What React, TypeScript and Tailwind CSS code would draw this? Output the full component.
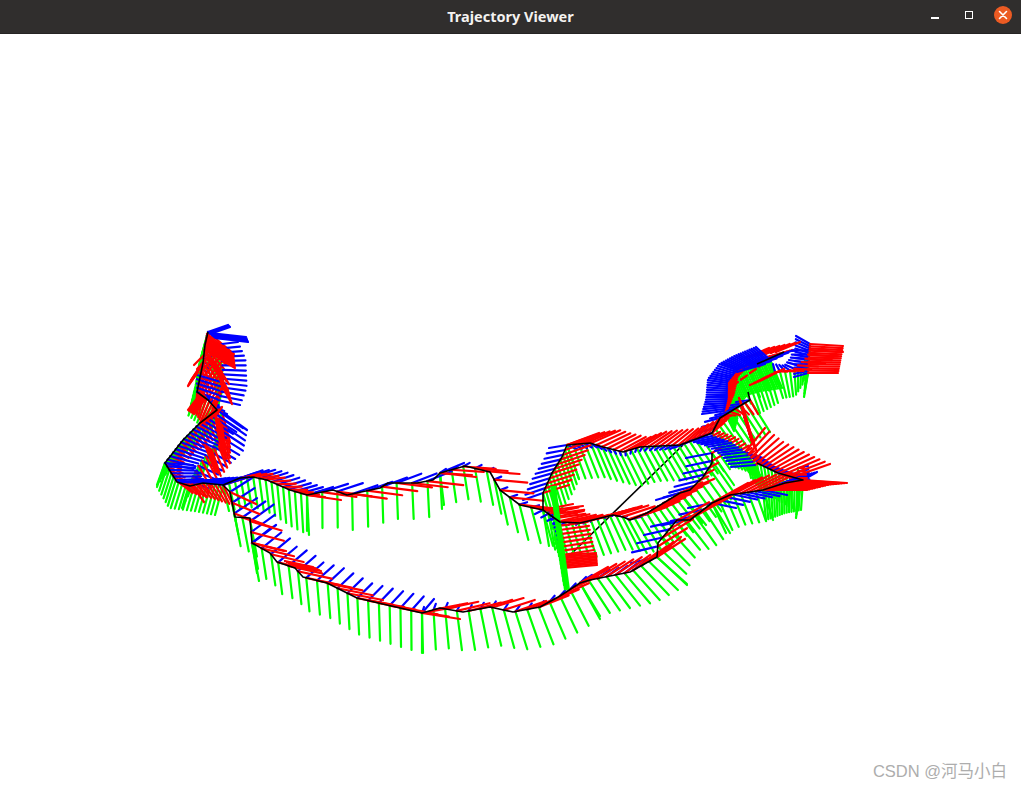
import React from "react";

type P = [number, number];
type Sec = { pts: P[]; n: number; r: [P, P]; g: [P, P]; b: [P, P]; top?: boolean; rt?: boolean };

const along = (pts: P[], t: number): P => {
  const lens = pts.slice(1).map((p, i) => Math.hypot(p[0] - pts[i][0], p[1] - pts[i][1]));
  const total = lens.reduce((a, b) => a + b, 0);
  let d = t * total;
  for (let i = 0; i < lens.length; i++) {
    if (d <= lens[i] || i === lens.length - 1) {
      const u = lens[i] ? d / lens[i] : 0;
      return [pts[i][0] + (pts[i + 1][0] - pts[i][0]) * u, pts[i][1] + (pts[i + 1][1] - pts[i][1]) * u];
    }
    d -= lens[i];
  }
  return pts[0];
};
const mix = (v: [P, P], t: number): P => [v[0][0] + (v[1][0] - v[0][0]) * t, v[0][1] + (v[1][1] - v[0][1]) * t];

const Z: P = [0, 0];
const sections: Sec[] = [
  // tower, upper half
  { pts: [[208, 332], [205, 345], [203, 363], [197, 392], [208, 400], [217, 410]], n: 24, r: [[26, 22], [-14, 20]], g: [[-6, 22], [-10, 24]], b: [[6, 2], [10, 4]] },
  { pts: [[210, 333], [214, 338]], n: 5, r: [Z, Z], g: [Z, Z], b: [[36, 4], [34, 4]], top: true },
  { pts: [[208, 332], [210, 334]], n: 3, r: [Z, Z], g: [Z, Z], b: [[20, -7], [20, -7]], top: true },
  { pts: [[214, 345], [222, 360], [224, 385], [218, 400]], n: 14, r: [[-20, 20], [-8, 22]], g: [[-8, 24], [-6, 24]], b: [[24, -3], [22, 5]], top: true },
  { pts: [[197, 375], [197, 392]], n: 5, r: [Z, Z], g: [Z, Z], b: [[24, 7], [20, 7]], top: true },
  // red over the tower
  { pts: [[207, 334], [205, 350]], n: 9, r: [[26, 20], [30, 18]], g: [Z, Z], b: [Z, Z], rt: true },
  { pts: [[204, 350], [215, 362]], n: 6, r: [[12, 20], [14, 22]], g: [Z, Z], b: [Z, Z], rt: true },
  { pts: [[218, 372], [222, 386]], n: 6, r: [[10, 18], [10, 18]], g: [Z, Z], b: [Z, Z], rt: true },
  { pts: [[203, 362], [198, 372]], n: 5, r: [[-12, 18], [-10, 14]], g: [Z, Z], b: [Z, Z], rt: true },
  { pts: [[202, 392], [206, 398]], n: 6, r: [[-14, 18], [-12, 16]], g: [Z, Z], b: [Z, Z], rt: true },
  { pts: [[215, 415], [222, 425]], n: 6, r: [[6, 34], [4, 34]], g: [Z, Z], b: [Z, Z], rt: true },
  { pts: [[200, 425], [216, 415]], n: 5, r: [[6, -8], [6, -8]], g: [Z, Z], b: [Z, Z], rt: true },
  { pts: [[205, 445], [212, 450]], n: 5, r: [[10, 26], [8, 24]], g: [Z, Z], b: [Z, Z], rt: true },
  // tower, lower half
  { pts: [[217, 410], [200, 423], [183, 440], [165, 463]], n: 18, r: [[8, 24], [14, 4]], g: [[-6, 22], [-8, 22]], b: [[26, 18], [28, 6]], top: true },
  { pts: [[222, 412], [220, 437], [213, 447], [200, 463], [190, 482]], n: 14, r: [[8, 30], [14, 20]], g: [[-6, 20], [-8, 26]], b: [[25, 18], [18, 6]] },
  { pts: [[165, 463], [177, 482], [203, 483], [223, 485]], n: 18, r: [[16, 6], [10, 20]], g: [[-8, 24], [-8, 30]], b: [[28, 2], [26, -8]], top: true },
  // branch going along the bottom
  { pts: [[230, 492], [235, 517], [250, 518], [252, 543]], n: 7, r: [[26, 12], [34, 8]], g: [[6, 30], [7, 38]], b: [[22, -14], [24, -18]] },
  { pts: [[252, 543], [270, 553], [277, 562], [295, 568], [303, 577], [327, 583], [357, 598], [387, 605], [422, 613]], n: 18, r: [[32, 8], [38, 6]], g: [[5, 30], [0, 40]], b: [[20, -16], [12, -14]] },
  { pts: [[285, 561], [293, 565]], n: 5, r: [[28, 6], [28, 6]], g: [Z, Z], b: [Z, Z] },
  { pts: [[422, 613], [440, 608], [463, 612], [490, 607], [513, 612], [540, 607], [560, 596], [580, 583]], n: 15, r: [[34, -6], [28, -14]], g: [[1, 40], [20, 36]], b: [[2, -6], [6, -6]] },
  { pts: [[580, 583], [590, 580], [630, 572], [657, 557]], n: 10, r: [[28, -16], [24, -20]], g: [[20, 33], [30, 28]], b: [[12, -8], [12, -10]] },
  { pts: [[657, 557], [658, 543], [677, 520], [690, 520], [712, 503]], n: 9, r: [[28, -18], [38, -20]], g: [[30, 27], [18, 30]], b: [[-26, 6], [-24, 5]] },
  { pts: [[712, 503], [730, 495], [763, 490]], n: 8, r: [[36, -20], [36, -18]], g: [[14, 30], [10, 30]], b: [[24, 5], [24, 5]] },
  // right tip
  { pts: [[763, 490], [785, 483], [803, 480]], n: 16, r: [[44, 0], [44, 3]], g: [[3, 30], [-2, 30]], b: [[14, -4], [14, -8]] },
  { pts: [[745, 452], [757, 463], [778, 473], [790, 478]], n: 14, r: [[20, -24], [40, -14]], g: [[6, 26], [2, 30]], b: [[18, 6], [18, 0]] },
  { pts: [[798, 468], [800, 488]], n: 7, r: [[6, 0], [10, 0]], g: [[0, 28], [-4, 30]], b: [[10, -2], [10, -2]] },
  // upper branch
  { pts: [[543, 493], [552, 473], [562, 457], [567, 445]], n: 11, r: [[26, -8], [28, -10]], g: [[10, 36], [12, 34]], b: [[-20, 7], [-18, 3]] },
  { pts: [[567, 445], [590, 443], [603, 447], [623, 452], [640, 447], [680, 445], [712, 433]], n: 26, r: [[32, -12], [16, -18]], g: [[12, 34], [24, 34]], b: [[10, 4], [-14, 4]] },
  { pts: [[712, 433], [720, 418], [738, 407], [750, 400]], n: 10, r: [[12, -10], [8, 14]], g: [[22, 30], [20, 32]], b: [[-16, 5], [-14, 2]] },
  // centre cluster
  { pts: [[712, 436], [730, 442], [745, 452], [755, 465]], n: 14, r: [[8, -4], [6, -4]], g: [[20, 30], [14, 28]], b: [[-22, 5], [-24, 2]], top: true },
  { pts: [[739, 398], [745, 420], [751, 440]], n: 14, r: [[5, 12], [6, 12]], g: [Z, Z], b: [Z, Z] },
  // arch
  { pts: [[724, 411], [727, 398], [727, 382], [737, 370], [750, 365], [770, 360]], n: 40, r: [[4, -3], [22, -10]], g: [[10, 20], [12, 28]], b: [[-22, 3], [-14, -13]], top: true },
  { pts: [[732, 386], [768, 360]], n: 5, r: [[6, -4], [6, -4]], g: [[10, 24], [10, 24]], b: [Z, Z] },
  { pts: [[737, 372], [770, 358]], n: 6, r: [[3, -2], [3, -2]], g: [[4, 14], [4, 14]], b: [[28, -8], [24, -8]], top: true },
  { pts: [[745, 358], [776, 352]], n: 7, r: [[24, -10], [24, -10]], g: [Z, Z], b: [Z, Z] },
  { pts: [[750, 385], [770, 375]], n: 6, r: [[14, -6], [14, -6]], g: [[10, 28], [8, 28]], b: [Z, Z] },
  { pts: [[775, 372], [793, 370], [807, 357], [810, 350]], n: 10, r: [[4, 0], [33, 2]], g: [[8, 26], [-6, 26]], b: [[-2, -8], [-18, 1]] },
  { pts: [[810, 344], [808, 373]], n: 14, r: [[33, 2], [30, 0]], g: [[-2, 10], [-4, 24]], b: [[-14, -8], [-14, 4]] },
  // middle branch
  { pts: [[543, 510], [560, 522], [580, 523], [613, 515], [623, 517], [630, 520], [647, 513], [680, 493]], n: 24, r: [[30, -6], [34, -14]], g: [[6, 36], [26, 32]], b: [[-8, 4], [14, -4]] },
  { pts: [[680, 493], [690, 490], [703, 477], [712, 463], [712, 453]], n: 8, r: [[8, -3], [10, -6]], g: [[22, 30], [22, 32]], b: [[-24, 7], [-26, 5]] },
  // upper track, from the tower foot to the centre
  { pts: [[223, 485], [240, 478], [253, 477], [267, 480], [290, 490], [307, 495]], n: 15, r: [[20, -6], [18, 2]], g: [[6, 26], [2, 40]], b: [[22, -8], [22, -6]] },
  { pts: [[307, 495], [333, 490], [347, 495], [380, 488], [388, 483], [417, 483], [433, 480], [440, 473]], n: 10, r: [[34, 5], [36, 4]], g: [[0, 36], [2, 36]], b: [[26, -8], [24, -10]] },
  { pts: [[440, 473], [465, 466], [490, 472], [500, 490], [520, 505], [543, 510]], n: 11, r: [[32, 2], [34, 4]], g: [[4, 32], [10, 36]], b: [[6, -4], [8, -2]] },
  // red stack below the junction
  { pts: [[553, 510], [558, 530], [562, 555]], n: 12, r: [[30, -4], [32, -5]], g: [[2, 30], [2, 30]], b: [[-4, 2], Z] },
  { pts: [[563, 555], [564, 568]], n: 9, r: [[33, -2], [33, -3]], g: [Z, Z], b: [Z, Z] },
];

const poses = sections.flatMap((s) =>
  Array.from({ length: s.n }, (_, i) => {
    const t = s.n > 1 ? i / (s.n - 1) : 0;
    return { o: along(s.pts, t), r: mix(s.r, t), g: mix(s.g, t), b: mix(s.b, t), top: !!s.top, rt: !!s.rt };
  })
);

const black: P[][] = [
  [[208, 332], [205, 345], [203, 363], [197, 392], [208, 400], [217, 410], [200, 423], [183, 440], [165, 463], [177, 482], [190, 486], [203, 483], [223, 485], [230, 492], [235, 517], [250, 518], [252, 543], [270, 553], [277, 562], [295, 568], [303, 577], [327, 583], [357, 598], [387, 605], [422, 613], [440, 608], [463, 612], [490, 607], [513, 612], [540, 607], [560, 596], [580, 583], [590, 580], [630, 572], [657, 557], [658, 543], [677, 520], [690, 520], [712, 503], [730, 495], [763, 490], [785, 483], [803, 480], [778, 473], [757, 463]],
  [[223, 485], [240, 478], [253, 477], [267, 480], [290, 490], [307, 495], [333, 490], [347, 495], [380, 488], [388, 483], [417, 483], [433, 480], [440, 473], [465, 466], [490, 472], [500, 490], [520, 505], [543, 510], [543, 493], [552, 473], [562, 457], [567, 445], [590, 443], [603, 447], [623, 452], [640, 447], [680, 445], [712, 433], [720, 418], [738, 407], [750, 400], [748, 392]],
  [[543, 510], [560, 522], [580, 523], [613, 515], [623, 517], [630, 520], [647, 513], [680, 493], [690, 490], [703, 477], [712, 463], [712, 453]],
  [[757, 364], [784, 352]],
];

const seg = (p: { o: P }, v: P, c: string, k: string) => (
  <line key={k} x1={p.o[0]} y1={p.o[1]} x2={p.o[0] + v[0]} y2={p.o[1] + v[1]} stroke={c} strokeWidth={2.2} strokeLinecap="round" />
);

const Trajectory = () => (
  <svg className="absolute inset-0 block" width="1021" height="754" viewBox="0 34 1021 754">
    <line x1="568" y1="557" x2="683" y2="445" stroke="#000000" strokeWidth="1.6" />
    {poses.map((p, i) => seg(p, p.g, "#00ff00", `g${i}`))}
    {poses.filter((p) => !p.top).map((p, i) => seg(p, p.b, "#0000ff", `b${i}`))}
    {poses.filter((p) => !p.rt).map((p, i) => seg(p, p.r, "#ff0000", `r${i}`))}
    {poses.filter((p) => p.top).map((p, i) => seg(p, p.b, "#0000ff", `t${i}`))}
    {poses.filter((p) => p.rt).map((p, i) => seg(p, p.r, "#ff0000", `u${i}`))}
    <line x1="553" y1="486" x2="567" y2="590" stroke="#00ff00" strokeWidth="6" />
    {black.map((l, i) => (
      <polyline key={i} points={l.map((p) => p.join(",")).join(" ")} fill="none" stroke="#000000" strokeWidth="1.6" strokeLinejoin="round" />
    ))}
  </svg>
);

export default function App() {
  return (
    <div className="flex h-[788px] w-[1021px] flex-col overflow-hidden bg-white">
      <header className="relative flex h-[34px] shrink-0 items-center justify-center border-b border-[#252423] bg-[#302e2d]">
        <span className="font-['Noto_Sans','Open_Sans',sans-serif] text-[14.5px] font-bold text-[#f4f2f0]">Trajectory Viewer</span>
        <div className="absolute top-0 right-0 flex h-[30px] items-center">
          <div className="mr-[26px] mt-[6px] h-[2px] w-[8px] bg-white" />
          <div className="mr-[21px] h-[8px] w-[8px] border border-white" />
          <div className="mr-[9px] flex h-[18px] w-[18px] items-center justify-center rounded-full bg-[#ec5b23]">
            <svg width="10" height="10" viewBox="0 0 10 10">
              <path d="M1.5 1.5 L8.5 8.5 M8.5 1.5 L1.5 8.5" stroke="#ffffff" strokeWidth="1.6" strokeLinecap="round" />
            </svg>
          </div>
        </div>
      </header>
      <main className="relative flex-1 bg-white">
        <Trajectory />
        <span className="absolute right-[14px] bottom-[5px] font-['Liberation_Sans','Noto_Sans_CJK_SC',sans-serif] text-[16.5px] leading-[24px] text-[#adadad]">
          CSDN @河马小白
        </span>
      </main>
    </div>
  );
}
